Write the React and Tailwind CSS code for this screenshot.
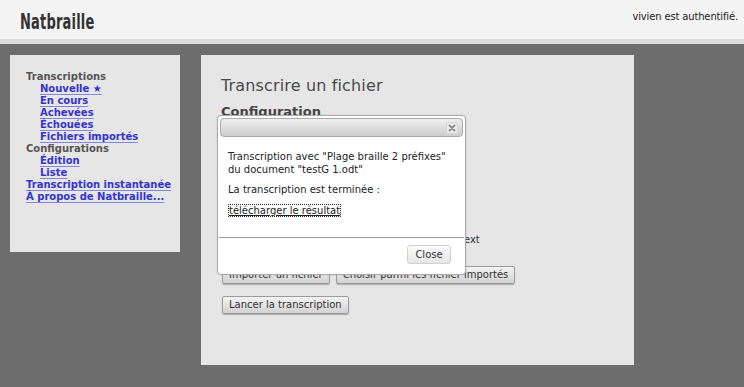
import React from "react";

const btn =
  "h-[18px] px-[6px] text-[10px] leading-[16px] text-[#333] border border-[#9a9a9a] rounded-[2px] bg-gradient-to-b from-[#f4f4f4] to-[#d2d2d2] shadow-[0_1px_1px_rgba(0,0,0,0.25)] whitespace-nowrap";

function NavLink({ children, indent }) {
  return (
    <div className={indent ? "pl-[14px]" : ""}>
      <a
        href="#"
        className="text-[#3434cc] underline decoration-[#8585dd] underline-offset-[1.5px]"
      >
        {children}
      </a>
    </div>
  );
}

export default function App() {
  return (
    <div
      className="relative min-h-screen bg-[#6d6d6d] text-[#222]"
      style={{ fontFamily: '"DejaVu Sans", sans-serif' }}
    >
      <header className="h-[44px] bg-[#f4f4f4] border-b-[5px] border-[#dcdcdc] flex justify-between items-start">
        <h1 className="ml-[20px] mt-[11px] text-[21px] leading-[22px] font-bold text-[#333] origin-left scale-x-[0.62] tracking-[0.3px]">
          Natbraille
        </h1>
        <div className="mt-[11px] mr-[6px] text-[10px] leading-[12px] text-[#222] tracking-[-0.15px]">
          vivien est authentifié.
        </div>
      </header>

      <div className="flex items-start pt-[11px] pl-[10px] gap-[21px]">
        <nav className="w-[170px] h-[197px] bg-[#e6e6e6] pt-[16px] pl-[16px] text-[10px] leading-[12px] font-bold">
          <div className="text-[#555]">Transcriptions</div>
          <NavLink indent>Nouvelle ★</NavLink>
          <NavLink indent>En cours</NavLink>
          <NavLink indent>Achevées</NavLink>
          <NavLink indent>Échouées</NavLink>
          <NavLink indent>Fichiers importés</NavLink>
          <div className="text-[#555]">Configurations</div>
          <NavLink indent>Édition</NavLink>
          <NavLink indent>Liste</NavLink>
          <NavLink>Transcription instantanée</NavLink>
          <NavLink>À propos de Natbraille...</NavLink>
        </nav>

        <main className="w-[433px] h-[310px] bg-[#e6e6e6] pt-[21px] pl-[20px] flex flex-col">
          <h2 className="text-[16px] leading-[20px] text-[#4a4a4a] tracking-[0.15px]">Transcrire un fichier</h2>
          <h3 className="mt-[8px] text-[13px] leading-[16px] font-bold text-[#444]">Configuration</h3>
          <div className="h-[114px]" />
          <div className="h-[12px] text-[10px] leading-[12px] text-[#333] flex">
            <span className="w-[239px] shrink-0" />
            <span>text</span>
          </div>
          <div className="mt-[20px] flex gap-[6px] pl-[1px]">
            <button className={btn}>Importer un fichier</button>
            <button className={btn}>Choisir parmi les fichier importés</button>
          </div>
          <div className="mt-[12px] pl-[1px] flex">
            <button className={btn}>Lancer la transcription</button>
          </div>
        </main>
      </div>

      <div className="absolute left-[217px] top-[115px] w-[249px] h-[160px] border border-[#aaa] rounded-[4px] bg-white p-[2px] flex flex-col shadow-[0_0_2px_rgba(0,0,0,0.15)]">
        <div className="h-[19px] shrink-0 border border-[#aaa] rounded-[4px] bg-gradient-to-b from-[#efefef] to-[#cdcdcd] flex items-center justify-end pr-[4px]">
          <div className="w-[12px] h-[12px] border border-[#d6d6d6] rounded-[2px] bg-[#ebebeb] flex items-center justify-center">
            <svg width="8" height="8" viewBox="0 0 8 8">
              <path d="M1.5 1.5 L6.5 6.5 M6.5 1.5 L1.5 6.5" stroke="#8a8a8a" strokeWidth="1.8" strokeLinecap="round" />
            </svg>
          </div>
        </div>
        <div className="h-[100px] shrink-0 pl-[8px] pt-[13px] text-[10px] leading-[13px] text-[#222]">
          <p>
            Transcription avec "Plage braille 2 préfixes"
            <br />
            du document "testG 1.odt"
          </p>
          <p className="mt-[7px]">La transcription est terminée :</p>
          <p className="mt-[8px]">
            <a href="#" className="underline border border-dotted border-[#333] text-[#222]">
              télécharger le résultat
            </a>
          </p>
        </div>
        <div className="h-px shrink-0 -mx-[1px] bg-[#9a9a9a]" />
        <div className="flex justify-end pt-[7px] pr-[12px]">
          <button className="w-[44px] h-[19px] text-[10px] leading-[17px] text-[#333] border border-[#d0d0d0] rounded-[3px] bg-gradient-to-b from-[#fbfbfb] to-[#e6e6e6]">
            Close
          </button>
        </div>
      </div>
    </div>
  );
}
